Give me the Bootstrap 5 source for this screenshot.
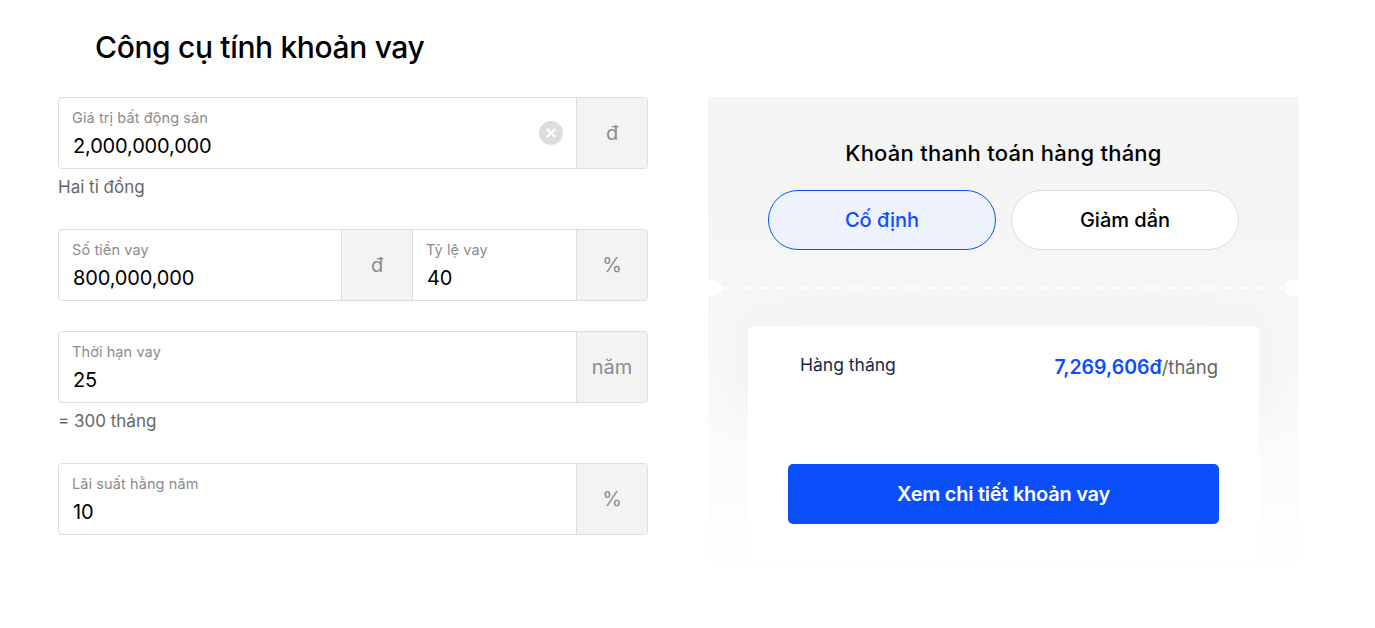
<!DOCTYPE html>
<html lang="vi">
<head>
<meta charset="utf-8">
<title>Công cụ tính khoản vay</title>
<link href="https://cdn.jsdelivr.net/npm/bootstrap@5.3.0/dist/css/bootstrap.min.css" rel="stylesheet">
<style>
body{font-family:Inter,"Noto Sans",sans-serif;background:#fff;color:#000;overflow:hidden}
.page-wrap{width:1375px;height:628px;padding:0 58px}
.tool-title{font-size:30px;font-weight:500;line-height:40px;margin:27px 0 30px 37px;letter-spacing:-.35px}
.cols{display:flex;gap:60px;align-items:flex-start}
.left-col{width:590px}
.right-col{width:591px;position:relative;height:478px;background:linear-gradient(#f4f4f4 0,#f6f6f7 45%,#fff 100%)}
.field-box{display:flex;height:72px;border:1px solid #ddd;border-radius:4px;overflow:hidden;background:#fff}
.field-main{flex:1 1 auto;padding:10px 13px 0;position:relative;min-width:0}
.field-label{font-size:14.5px;line-height:20px;color:#8c8c8c;letter-spacing:.1px}
.field-value{font-size:20px;line-height:28px;color:#000;padding-left:1px;margin-top:4px;letter-spacing:-.15px}
.unit-box{width:71px;flex:none;background:#f3f3f3;border-left:1px solid #ddd;display:flex;align-items:center;justify-content:center;color:#8c8c8c;font-size:20px;font-weight:400}
.clear-btn{position:absolute;right:13px;top:23px;width:24px;height:24px}
.hint-text{font-size:17px;line-height:24px;color:#666;margin-top:6px;height:24px}
.field-gap{height:30px}
.split-first{flex:0 0 282px}
.split-second{flex:1 1 auto;border-left:1px solid #ddd}
.panel-title{font-size:22px;font-weight:500;line-height:30px;text-align:center;padding-top:41px;margin:0;letter-spacing:.24px}
.mode-row{display:flex;justify-content:center;gap:15px;margin-top:22px}
.mode-btn{width:228px;height:60px;border-radius:30px;font-size:20px;font-weight:500;border:1px solid #ddd;background:#fff;color:#000;padding:0}
.mode-btn.is-on{background:#edf2fd;border-color:#0b4ffb;color:#0b4ffb}
.notch{position:absolute;top:183px;width:14px;height:16px;background:#fff}
.notch-l{left:0;border-radius:0 8px 8px 0}
.notch-r{right:0;border-radius:8px 0 0 8px}
.dash-line{position:absolute;top:190px;left:14px;right:14px;height:2px;background:repeating-linear-gradient(90deg,#fff 0,#fff 10px,transparent 10px,transparent 18.5px)}
.result-card{position:absolute;left:40px;right:40px;top:229px;border-radius:6px 6px 0 0}
.result-head{height:79px;display:flex;justify-content:space-between;padding:27px 41px 0 52px;background:#fff;box-shadow:0 8px 40px 0 rgba(225,228,240,.4);border-radius:6px 6px 0 0}
.result-body{position:relative;background:#fff;height:155px;padding-top:59px}
.result-label{font-size:17.5px;line-height:24px;color:#14294f}
.result-amount{font-size:19.5px;font-weight:600;line-height:28px;color:#0b4ffb}
.result-unit{font-size:18.5px;font-weight:400;color:#666}
.detail-btn{display:block;width:431px;height:60px;margin:0 auto;background:#0b4ffb;border:0;border-radius:5px;color:#fff;font-size:20px;font-weight:600;padding:0;letter-spacing:-.25px}
</style>
</head>
<body>
<div class="page-wrap">
  <h1 class="tool-title">Công cụ tính khoản vay</h1>
  <div class="cols">
    <div class="left-col">
      <div class="field-box">
        <div class="field-main">
          <div class="field-label">Giá trị bất động sản</div>
          <div class="field-value">2,000,000,000</div>
          <svg class="clear-btn" viewBox="0 0 25 25" aria-hidden="true"><circle cx="12.5" cy="12.5" r="12.5" fill="#ddd"/><path d="M8.8 8.8l7.4 7.4M16.2 8.8l-7.4 7.4" stroke="#fff" stroke-width="2.4" stroke-linecap="round"/></svg>
        </div>
        <div class="unit-box">đ</div>
      </div>
      <div class="hint-text">Hai tỉ đồng</div>
      <div class="field-gap"></div>
      <div class="field-box">
        <div class="field-main split-first">
          <div class="field-label">Số tiền vay</div>
          <div class="field-value">800,000,000</div>
        </div>
        <div class="unit-box">đ</div>
        <div class="field-main split-second">
          <div class="field-label">Tỷ lệ vay</div>
          <div class="field-value">40</div>
        </div>
        <div class="unit-box">%</div>
      </div>
      <div class="field-gap"></div>
      <div class="field-box">
        <div class="field-main">
          <div class="field-label">Thời hạn vay</div>
          <div class="field-value">25</div>
        </div>
        <div class="unit-box">năm</div>
      </div>
      <div class="hint-text">= 300 tháng</div>
      <div class="field-gap"></div>
      <div class="field-box">
        <div class="field-main">
          <div class="field-label">Lãi suất hằng năm</div>
          <div class="field-value">10</div>
        </div>
        <div class="unit-box">%</div>
      </div>
    </div>
    <div class="right-col">
      <h2 class="panel-title">Khoản thanh toán hàng tháng</h2>
      <div class="mode-row">
        <button type="button" class="mode-btn is-on">Cố định</button>
        <button type="button" class="mode-btn">Giảm dần</button>
      </div>
      <span class="notch notch-l"></span>
      <span class="notch notch-r"></span>
      <span class="dash-line"></span>
      <div class="result-card">
        <div class="result-head">
          <span class="result-label">Hàng tháng</span>
          <span class="result-amount">7,269,606đ<span class="result-unit">/tháng</span></span>
        </div>
        <div class="result-body">
          <button type="button" class="detail-btn">Xem chi tiết khoản vay</button>
        </div>
      </div>
    </div>
  </div>
</div>
<script src="https://cdn.jsdelivr.net/npm/bootstrap@5.3.0/dist/js/bootstrap.bundle.min.js"></script>
</body>
</html>
